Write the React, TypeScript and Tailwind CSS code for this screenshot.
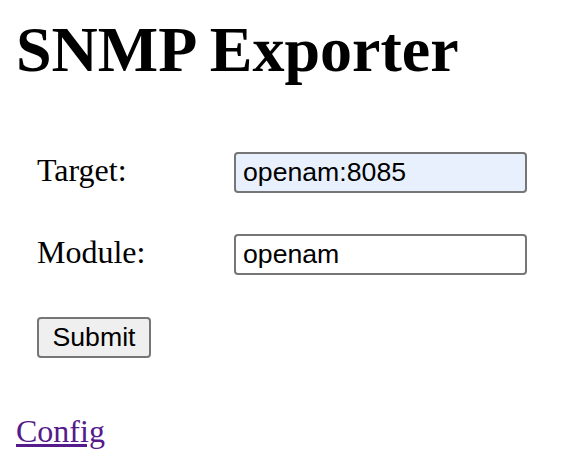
export default function App() {
  return (
    <div className="w-[580px] h-[462px] bg-white text-black font-['Liberation_Serif',serif] pl-4 flex flex-col">
      <h1 className="mt-[18px] text-[64px] leading-[64px] font-bold">SNMP Exporter</h1>
      <form className="mt-[70px] pl-[21px] flex flex-col" onSubmit={(e) => e.preventDefault()}>
        <div className="flex items-center h-[41px]">
          <label className="w-[197px] text-[32px] leading-[37px] pb-[4px]">Target:</label>
          <input
            type="text"
            defaultValue="openam:8085"
            className="w-[293px] h-[41px] border-2 border-[#767676] rounded-[4px] bg-[#e8f0fe] px-[7px] text-[26.67px] font-['Liberation_Sans',Arial,sans-serif] text-black outline-none"
          />
        </div>
        <div className="flex items-center h-[41px] mt-[41px]">
          <label className="w-[197px] text-[32px] leading-[37px] pb-[4px]">Module:</label>
          <input
            type="text"
            defaultValue="openam"
            className="w-[293px] h-[41px] border-2 border-[#767676] rounded-[4px] bg-white px-[7px] text-[26.67px] font-['Liberation_Sans',Arial,sans-serif] text-black outline-none"
          />
        </div>
        <div className="mt-[42px] flex">
          <button
            type="submit"
            className="w-[114px] h-[41px] border-2 border-[#767676] rounded-[4px] bg-[#efefef] text-[26.67px] leading-none font-['Liberation_Sans',Arial,sans-serif] text-black"
          >
            Submit
          </button>
        </div>
      </form>
      <p className="mt-[57px] text-[32px] leading-[32px]">
        <a href="#" className="text-[#551a8b] underline">Config</a>
      </p>
    </div>
  );
}
